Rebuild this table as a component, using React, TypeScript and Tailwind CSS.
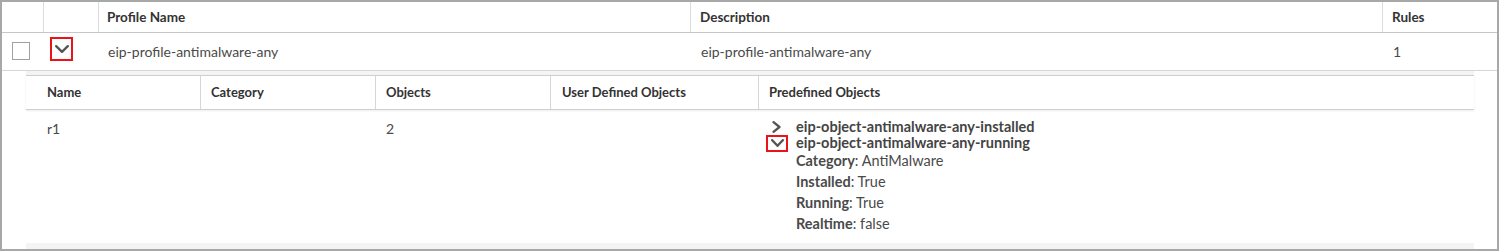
const font = { fontFamily: "Lato, 'Open Sans', sans-serif" };

const nestedCols = [
  { label: "Name", w: "w-[175px] pl-[21px]" },
  { label: "Category", w: "w-[175px] pl-[10px]" },
  { label: "Objects", w: "w-[175px] pl-[10px]" },
  { label: "User Defined Objects", w: "w-[208px] pl-[11px]" },
];

const details = [
  { k: "Category", v: "AntiMalware" },
  { k: "Installed", v: "True" },
  { k: "Running", v: "True" },
  { k: "Realtime", v: "false" },
];

const ChevDown = ({ w, h }: { w: number; h: number }) => (
  <svg width={w} height={h} viewBox={`0 0 ${w} ${h}`} fill="none">
    <path
      d={`M1.2 1.2 L${w / 2} ${h - 1.2} L${w - 1.2} 1.2`}
      stroke="#555"
      strokeWidth="2.4"
      strokeLinecap="round"
      strokeLinejoin="round"
    />
  </svg>
);

const ChevRight = () => (
  <svg width="9" height="12" viewBox="0 0 9 12" fill="none">
    <path
      d="M1.5 1.2 L7.5 6 L1.5 10.8"
      stroke="#555"
      strokeWidth="2.3"
      strokeLinecap="round"
      strokeLinejoin="round"
    />
  </svg>
);

const App = () => {
  return (
    <div
      className="w-[1499px] h-[251px] bg-white border-2 border-[#a8a8a8] overflow-hidden text-[#4a4a4a]"
      style={font}
    >
      {/* profile table header */}
      <div className="flex h-[31px] border-b border-[#c6c6c6] text-[13.5px] font-bold text-[#333]">
        <div className="w-[42px] border-r border-[#dcdcdc]"></div>
        <div className="w-[55px] border-r border-[#dcdcdc]"></div>
        <div className="w-[592px] border-r border-[#dcdcdc] pl-[8px] flex items-center">
          Profile Name
        </div>
        <div className="w-[692px] border-r border-[#dcdcdc] pl-[9px] flex items-center">
          Description
        </div>
        <div className="flex-1 pl-[9px] flex items-center">Rules</div>
      </div>

      {/* profile row */}
      <div className="flex h-[38px] border-b border-[#d6d6d6] text-[14px]">
        <div className="w-[42px] pl-[10px] pt-[9px]">
          <div className="w-[18px] h-[18px] border border-[#a0a0a0] bg-white"></div>
        </div>
        <div className="w-[55px] pl-[6px] pt-[4px]">
          <div className="w-[23px] h-[24px] border-2 border-[#e8141a] flex items-center justify-center">
            <ChevDown w={14} h={8} />
          </div>
        </div>
        <div className="w-[592px] pl-[9px] flex items-center">eip-profile-antimalware-any</div>
        <div className="w-[692px] pl-[10px] flex items-center">eip-profile-antimalware-any</div>
        <div className="flex-1 pl-[10px] flex items-center">1</div>
      </div>

      {/* nested rules table */}
      <div className="ml-[24px] mr-[23px] bg-[#f4f4f4] pt-[4px] pb-[6px]">
        <div className="bg-white">
          <div className="flex h-[35px] border-t border-b border-[#cfcfcf] shadow-[0_1px_2px_rgba(0,0,0,0.08)] text-[13px] font-bold text-[#333]">
            {nestedCols.map((c) => (
              <div
                key={c.label}
                className={`${c.w} border-r border-[#d6d6d6] flex items-center`}
              >
                {c.label}
              </div>
            ))}
            <div className="flex-1 pl-[10px] flex items-center">Predefined Objects</div>
          </div>

          <div className="flex h-[133px] text-[14px]">
            <div className="w-[175px] pl-[21px] pt-[8px]">r1</div>
            <div className="w-[175px]"></div>
            <div className="w-[175px] pl-[10px] pt-[8px]">2</div>
            <div className="w-[208px]"></div>
            <div className="flex-1 pl-[7px] pt-[9px] text-[14.5px]">
              <div className="flex items-center h-[16px]">
                <div className="w-[30px] flex items-center pl-[6px]">
                  <ChevRight />
                </div>
                <span className="font-bold text-[#444]">
                  eip-object-antimalware-any-installed
                </span>
              </div>
              <div className="flex items-center h-[16px]">
                <div className="w-[30px]">
                  <div className="w-[22px] h-[17px] border-2 border-[#e8141a] flex items-center justify-center">
                    <ChevDown w={13} h={8} />
                  </div>
                </div>
                <span className="font-bold text-[#444]">
                  eip-object-antimalware-any-running
                </span>
              </div>
              <div className="pl-[30px] -mt-[1px]">
                {details.map((d) => (
                  <div key={d.k} className="leading-[21px]">
                    <span className="font-bold">{d.k}</span>: {d.v}
                  </div>
                ))}
              </div>
            </div>
          </div>
        </div>
      </div>
    </div>
  );
};

export default App;
